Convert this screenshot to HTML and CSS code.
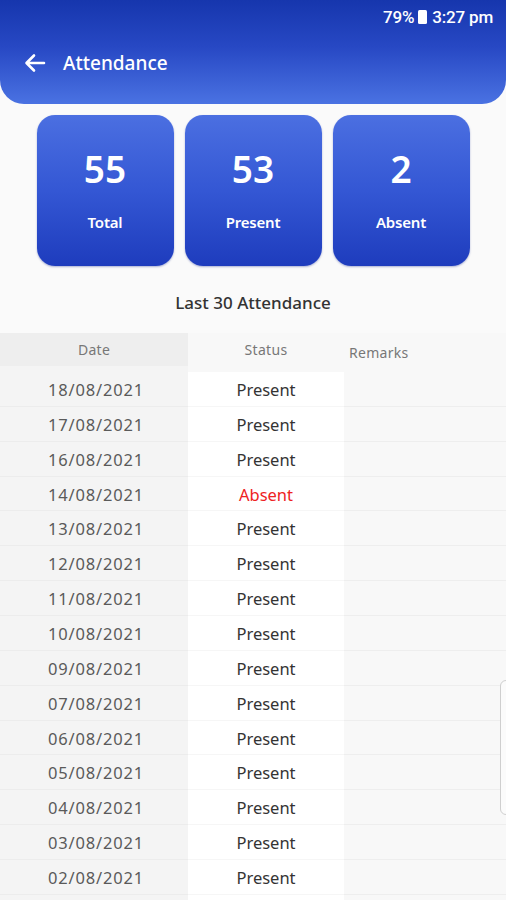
FILE: index.html
```html
<!DOCTYPE html>
<html>
<head>
<meta charset="utf-8">
<link rel="stylesheet" href="styles.css">
</head>
<body>
<div class="app">
  <header class="topbar">
    <div class="statusbar">
      <span>79%</span>
      <span class="battery"></span>
      <span>3:27 pm</span>
    </div>
    <div class="toolbar">
      <svg class="back" width="24" height="24" viewBox="0 0 24 24"><path d="M21 12H4M11 4.5L3.5 12L11 19.5" fill="none" stroke="#fff" stroke-width="2.6" stroke-linecap="round" stroke-linejoin="round"/></svg>
      <span class="title">Attendance</span>
    </div>
  </header>

  <section class="cards">
    <div class="card"><div class="num">55</div><div class="lbl">Total</div></div>
    <div class="card"><div class="num">53</div><div class="lbl">Present</div></div>
    <div class="card"><div class="num">2</div><div class="lbl">Absent</div></div>
  </section>

  <h2 class="subtitle">Last 30 Attendance</h2>

  <div class="table">
    <div class="th th-date">Date</div>
    <div class="th th-status">Status</div>
    <div class="th th-remarks">Remarks</div>
    <div class="spacer s-date"></div><div class="spacer s-status"></div><div class="spacer s-remarks"></div>

    <div class="td date">18/08/2021</div><div class="td status">Present</div><div class="td remarks"></div>
    <div class="td date">17/08/2021</div><div class="td status">Present</div><div class="td remarks"></div>
    <div class="td date">16/08/2021</div><div class="td status">Present</div><div class="td remarks"></div>
    <div class="td date">14/08/2021</div><div class="td status absent">Absent</div><div class="td remarks"></div>
    <div class="td date">13/08/2021</div><div class="td status">Present</div><div class="td remarks"></div>
    <div class="td date">12/08/2021</div><div class="td status">Present</div><div class="td remarks"></div>
    <div class="td date">11/08/2021</div><div class="td status">Present</div><div class="td remarks"></div>
    <div class="td date">10/08/2021</div><div class="td status">Present</div><div class="td remarks"></div>
    <div class="td date">09/08/2021</div><div class="td status">Present</div><div class="td remarks"></div>
    <div class="td date">07/08/2021</div><div class="td status">Present</div><div class="td remarks"></div>
    <div class="td date">06/08/2021</div><div class="td status">Present</div><div class="td remarks"></div>
    <div class="td date">05/08/2021</div><div class="td status">Present</div><div class="td remarks"></div>
    <div class="td date">04/08/2021</div><div class="td status">Present</div><div class="td remarks"></div>
    <div class="td date">03/08/2021</div><div class="td status">Present</div><div class="td remarks"></div>
    <div class="td date">02/08/2021</div><div class="td status">Present</div><div class="td remarks"></div>
    <div class="td date"></div><div class="td status"></div><div class="td remarks"></div>
  </div>

  <div class="scroll-handle"></div>
</div>
</body>
</html>
```

FILE: styles.css
```css
* { box-sizing: border-box; }
html, body { margin: 0; padding: 0; }
body {
  background: #fafafa;
  font-family: "Noto Sans", "Open Sans", sans-serif;
  width: 506px;
  height: 900px;
  overflow: hidden;
}
.app { position: relative; height: 900px; overflow: hidden; }

.topbar {
  height: 104px;
  background: linear-gradient(180deg, #1636ad 0%, #2748c4 45%, #4a72e2 100%);
  border-radius: 0 0 24px 24px;
  color: #fff;
  display: flex;
  flex-direction: column;
}
.statusbar {
  height: 33px;
  display: flex;
  align-items: center;
  justify-content: flex-end;
  padding-right: 13px;
  gap: 2px;
  font-family: Roboto, "Noto Sans", sans-serif;
  font-size: 17px;
  font-weight: 500;
  letter-spacing: -0.2px;
}
.battery {
  width: 9px;
  height: 14px;
  background: #fff;
  border-radius: 1.5px;
  margin: 0 3px 0 2px;
}
.toolbar {
  display: flex;
  align-items: center;
  height: 60px;
  padding-left: 23px;
  gap: 16px;
}
.title {
  font-size: 19px;
  font-weight: 500;
}

.cards {
  display: flex;
  justify-content: center;
  gap: 11px;
  margin-top: 11px;
}
.card {
  width: 137px;
  height: 151px;
  border-radius: 18px;
  background: linear-gradient(180deg, #4b6fe1 0%, #3457d4 50%, #1e3cbd 100%);
  color: #fff;
  display: flex;
  flex-direction: column;
  align-items: center;
  box-shadow: 0 1px 2px rgba(20, 40, 140, 0.35);
}
.num {
  font-size: 37px;
  font-weight: 600;
  line-height: 44px;
  margin-top: 32px;
}
.lbl {
  font-size: 15px;
  font-weight: 600;
  line-height: 20px;
  margin-top: 21px;
  letter-spacing: -0.2px;
}

.subtitle {
  margin: 26px 0 0;
  height: 22px;
  line-height: 22px;
  text-align: center;
  font-size: 17px;
  font-weight: 500;
  color: #333;
}

.table {
  margin-top: 19px;
  display: grid;
  grid-template-columns: 188px 156px 1fr;
  grid-auto-rows: 34.86px;
  grid-template-rows: 33px 6px;
}
.th {
  font-size: 14px;
  color: #777;
  display: flex;
  align-items: center;
  justify-content: center;
  letter-spacing: 0.3px;
}
.th-date { background: #eeeeee; }
.th-status { background: #f8f8f8; }
.th-remarks {
  background: #f8f8f8;
  justify-content: flex-start;
  padding-left: 5px;
  padding-top: 6px;
}
.s-date { background: #f4f4f4; }
.s-status { background: #f8f8f8; }
.s-remarks { background: #f8f8f8; }

.td {
  display: flex;
  align-items: center;
  justify-content: center;
  font-size: 16.5px;
}
.date {
  background: #f4f4f4;
  color: #5a5a5a;
  border-bottom: 1px solid #ececec;
  padding-top: 1px;
  padding-left: 4px;
  letter-spacing: 0.8px;
}
.status {
  background: #ffffff;
  color: #333;
  border-bottom: 1px solid #f6f6f6;
  padding-top: 1px;
}
.remarks {
  background: #f8f8f8;
  border-bottom: 1px solid #eeeeee;
}
.absent { color: #ee2222; }

.scroll-handle {
  position: absolute;
  left: 500px;
  top: 680px;
  width: 14px;
  height: 135px;
  border: 1px solid #cfcfcf;
  border-radius: 6px;
  background: #fbfbfb;
}
```
